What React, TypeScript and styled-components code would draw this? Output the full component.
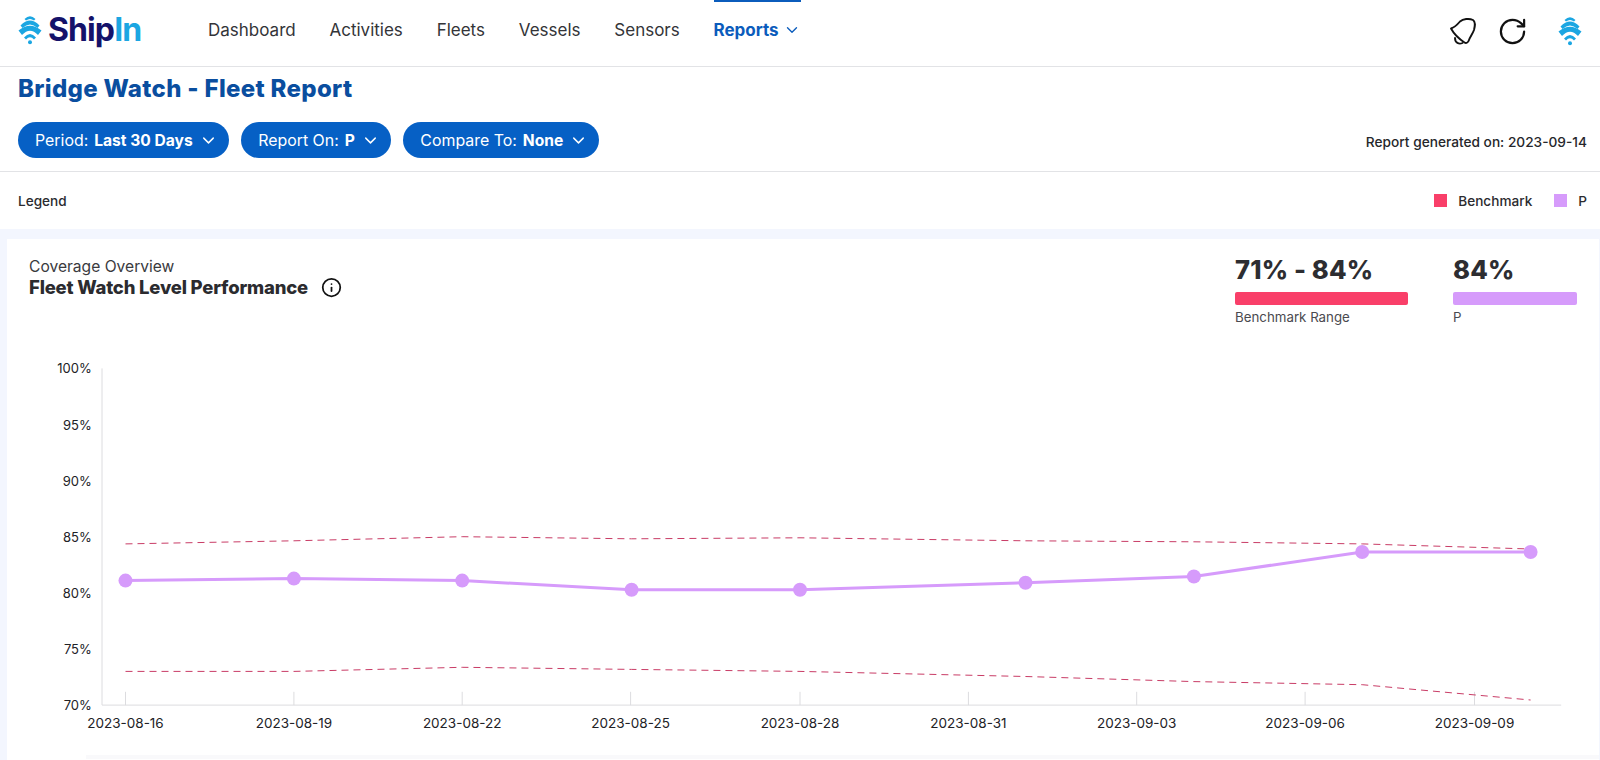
import React from "react";
import styled, { createGlobalStyle } from "styled-components";
import { ChevronDown, Info, RotateCw } from "lucide-react";

const Global = createGlobalStyle`
  html, body { margin: 0; padding: 0; background: #fff; }
  body { font-family: Inter, "Liberation Sans", sans-serif; color: #2b2b2f; -webkit-font-smoothing: antialiased; }
`;

const Page = styled.div`
  width: 1600px;
  height: 760px;
  overflow: hidden;
  display: flex;
  flex-direction: column;
  background: #fff;
`;

const Header = styled.header`
  height: 67px;
  flex: none;
  box-sizing: border-box;
  border-bottom: 1px solid #e2e3e6;
  display: flex;
  align-items: stretch;
  padding: 0 18px;
`;

const Brand = styled.div`
  width: 190px;
  flex: none;
  display: flex;
  align-items: center;
  gap: 6px;
  padding-bottom: 6px;
`;

const BrandName = styled.span`
  font-size: 32px;
  font-weight: 700;
  letter-spacing: -0.9px;
  color: #14126a;
  line-height: 1;
  span { color: #1ba6e2; }
`;

const Nav = styled.nav`
  display: flex;
  gap: 33.8px;
  flex: 1;
`;

const NavItem = styled.a<{ $active?: boolean }>`
  display: flex;
  align-items: center;
  gap: 4px;
  box-sizing: border-box;
  height: 58px;
  font-size: 17px;
  font-weight: ${(p) => (p.$active ? 700 : 400)};
  color: ${(p) => (p.$active ? "#0b5cbc" : "#333438")};
  border-top: 2px solid ${(p) => (p.$active ? "#0b5cbc" : "transparent")};
`;

const Tools = styled.div`
  display: flex;
  align-items: center;
  gap: 20px;
  padding-bottom: 4px;
  svg { display: block; }
`;

const ToolLogo = styled.span`
  margin-left: 10px;
`;

const TitleRow = styled.h1`
  margin: 0;
  padding: 10px 18px 0;
  font-size: 24px;
  line-height: 24px;
  font-weight: 800;
  color: #0a4e9f;
  letter-spacing: 0.33px;
`;

const FilterRow = styled.div`
  display: flex;
  align-items: flex-start;
  gap: 12.5px;
  height: 71px;
  flex: none;
  padding: 21px 13px 0 18px;
  box-sizing: border-box;
  border-bottom: 1px solid #e2e3e6;
`;

const Pill = styled.button`
  height: 36px;
  border: 0;
  border-radius: 18px;
  padding: 0 11px 0 17px;
  background: #0660c5;
  color: #fff;
  display: flex;
  align-items: center;
  gap: 6px;
  font: 400 15.9px Inter, sans-serif;
  white-space: nowrap;
  b { font-weight: 700; font-size: 15.6px; }
`;

const Generated = styled.div`
  margin-left: auto;
  font-size: 13.7px;
  line-height: 40px;
  font-weight: 500;
  color: #26272b;
`;

const LegendRow = styled.div`
  height: 57px;
  flex: none;
  display: flex;
  align-items: center;
  padding: 0 13px 0 18px;
  font-size: 13.6px;
  font-weight: 500;
  color: #2b2b2f;
`;

const LegendItems = styled.div`
  margin-left: auto;
  display: flex;
  gap: 22px;
`;

const LegendItem = styled.span`
  display: flex;
  align-items: center;
  gap: 11px;
`;

const Swatch = styled.i<{ $color: string }>`
  width: 13px;
  height: 13px;
  background: ${(p) => p.$color};
`;

const Band = styled.main`
  flex: 1;
  background: #f3f6fe;
  padding: 10px 1px 0 7px;
  min-height: 0;
`;

const Card = styled.section`
  background: #fff;
  height: 100%;
  box-sizing: border-box;
  padding: 17px 22px 0 22px;
`;

const CardTop = styled.div`
  display: flex;
  justify-content: space-between;
  height: 86px;
`;

const Heading = styled.div`
  font-size: 15.6px;
  line-height: 21px;
  color: #3a3a3e;
`;

const HeadingStrong = styled.div`
  display: flex;
  align-items: center;
  gap: 13px;
  font-size: 18.5px;
  font-weight: 800;
  color: #2b2b2f;
  letter-spacing: -0.2px;
`;

const Stats = styled.div`
  display: flex;
  gap: 45px;
  margin-top: -3px;
`;

const Stat = styled.div<{ $w: number }>`
  width: ${(p) => p.$w}px;
`;

const StatValue = styled.div`
  font-size: 25.6px;
  line-height: 33px;
  font-weight: 800;
  color: #2d2d31;
  letter-spacing: 0.15px;
`;

const StatBar = styled.div<{ $color: string }>`
  height: 13px;
  margin-top: 6px;
  border-radius: 2px;
  background: ${(p) => p.$color};
`;

const StatLabel = styled.div`
  margin-top: 4px;
  font-size: 13.3px;
  line-height: 16px;
  color: #4a4a4f;
`;

const Chart = styled.svg`
  display: block;
  margin-left: -29px;
  width: 1600px;
  height: 413px;
`;

const AxisText = styled.text<{ $size: number }>`
  font-family: Inter, sans-serif;
  font-size: ${(p) => p.$size}px;
  fill: #222226;
`;

const NextCardEdge = styled.div`
  height: 4px;
  margin: 0 -22px 0 57px;
  background: #f9f9fb;
`;

const s = 1600 / 1568;
const X = (v: number) => +(v * s).toFixed(1);
const Y = (v: number) => +(v * s - 342).toFixed(1);

const points: [number, number][] = [
  [123, 569], [288, 567], [453, 569], [619, 578], [784, 578],
  [1005, 571], [1170, 565], [1335, 541], [1500, 541],
];
const upper: [number, number][] = [
  [123, 533], [288, 530], [453, 526], [619, 528], [784, 527],
  [1005, 530], [1170, 531], [1335, 533], [1500, 538],
];
const lower: [number, number][] = [
  [123, 658], [288, 658], [453, 654], [619, 656], [784, 658],
  [1005, 663], [1170, 668], [1335, 671], [1500, 686],
];
const ticks: [number, string][] = [
  [123, "2023-08-16"], [288, "2023-08-19"], [453, "2023-08-22"],
  [618, "2023-08-25"], [784, "2023-08-28"], [949, "2023-08-31"],
  [1114, "2023-09-03"], [1279, "2023-09-06"], [1445, "2023-09-09"],
];
const yLabels: [number, string][] = [
  [361, "100%"], [416, "95%"], [471, "90%"], [526, "85%"], [581, "80%"], [636, "75%"], [691, "70%"],
];
const toPts = (a: [number, number][]) => a.map(([x, y]) => `${X(x)},${Y(y)}`).join(" ");

const WaveMark = () => (
  <svg width="24" height="30" viewBox="0 0 24 30" fill="#1ba6e2">
    <path d="M6.5 4 Q12 -1.5 17.5 4 L16 5.5 Q12 2.5 8 5.5 Z" />
    <path d="M2.5 10.5 Q12 0.5 21.5 10.5 L19.5 13 Q12 6 4.5 13 Z" />
    <path d="M0.5 15.5 Q12 6 23.5 15.5 L20 20 Q12 11.5 4 20 Z" />
    <path d="M6 22.5 Q12 15.5 18 22.5 L16 24.5 Q12 20 8 24.5 Z" />
    <circle cx="12" cy="27.2" r="2" />
  </svg>
);

const BellIcon = () => (
  <svg width="28" height="28" viewBox="0 0 28 28" fill="none" stroke="#111" strokeWidth="1.9" strokeLinejoin="round" strokeLinecap="round">
    <path d="M2 11.5 C5 10.5 8 8 11 4.5 C14 2 20 1 24 3 C27 5 26 9 25 13 C23.5 17 21 20 20 23 C19 26 17 26.5 15.5 25.5 C11 22.5 5 17 2 11.5 Z" />
    <path d="M6 21 C6 26 10 27.5 13.5 26" />
  </svg>
);

export default function App() {
  return (
    <Page>
      <Global />
      <Header>
        <Brand>
          <WaveMark />
          <BrandName>Ship<span>In</span></BrandName>
        </Brand>
        <Nav>
          <NavItem>Dashboard</NavItem>
          <NavItem>Activities</NavItem>
          <NavItem>Fleets</NavItem>
          <NavItem>Vessels</NavItem>
          <NavItem>Sensors</NavItem>
          <NavItem $active>
            Reports <ChevronDown size={18} strokeWidth={1.8} />
          </NavItem>
        </Nav>
        <Tools>
          <BellIcon />
          <RotateCw size={31} strokeWidth={1.7} color="#111" />
          <ToolLogo><WaveMark /></ToolLogo>
        </Tools>
      </Header>
      <TitleRow>Bridge Watch - Fleet Report</TitleRow>
      <FilterRow>
        <Pill>Period: <b>Last 30 Days</b> <ChevronDown size={19} strokeWidth={1.8} /></Pill>
        <Pill>Report On: <b>P</b> <ChevronDown size={19} strokeWidth={1.8} /></Pill>
        <Pill>Compare To: <b>None</b> <ChevronDown size={19} strokeWidth={1.8} /></Pill>
        <Generated>Report generated on: 2023-09-14</Generated>
      </FilterRow>
      <LegendRow>
        Legend
        <LegendItems>
          <LegendItem><Swatch $color="#f93f69" />Benchmark</LegendItem>
          <LegendItem><Swatch $color="#d69bfb" />P</LegendItem>
        </LegendItems>
      </LegendRow>
      <Band>
        <Card>
          <CardTop>
            <Heading>
              Coverage Overview
              <HeadingStrong>
                Fleet Watch Level Performance <Info size={21} strokeWidth={2} color="#111" />
              </HeadingStrong>
            </Heading>
            <Stats>
              <Stat $w={173}>
                <StatValue>71% - 84%</StatValue>
                <StatBar $color="#f93f69" />
                <StatLabel>Benchmark Range</StatLabel>
              </Stat>
              <Stat $w={124}>
                <StatValue>84%</StatValue>
                <StatBar $color="#d69bfb" />
                <StatLabel>P</StatLabel>
              </Stat>
            </Stats>
          </CardTop>
          <Chart viewBox="0 0 1600 413">
            <polyline points={`${X(100)},${Y(361)} ${X(100)},${Y(691)} ${X(1530)},${Y(691)}`} fill="none" stroke="#dcdcdf" strokeWidth="1" />
            {ticks.map(([x, label]) => (
              <g key={label}>
                <line x1={X(x)} x2={X(x)} y1={Y(678)} y2={Y(691)} stroke="#dcdcdf" />
                <AxisText $size={13.5} x={X(x)} y={Y(691) + 23} textAnchor="middle">{label}</AxisText>
              </g>
            ))}
            {yLabels.map(([y, label]) => (
              <AxisText $size={13} key={label} x={X(90)} y={Y(y) + 5} textAnchor="end">{label}</AxisText>
            ))}
            <polyline points={toPts(upper)} fill="none" stroke="#c93c66" strokeWidth="1" strokeDasharray="7 5" />
            <polyline points={toPts(lower)} fill="none" stroke="#c93c66" strokeWidth="1" strokeDasharray="7 5" />
            <polyline points={toPts(points)} fill="none" stroke="#d69bfb" strokeWidth="3" />
            {points.map(([x, y]) => (
              <circle key={x} cx={X(x)} cy={Y(y)} r="7" fill="#d69bfb" />
            ))}
          </Chart>
          <NextCardEdge />
        </Card>
      </Band>
    </Page>
  );
}
